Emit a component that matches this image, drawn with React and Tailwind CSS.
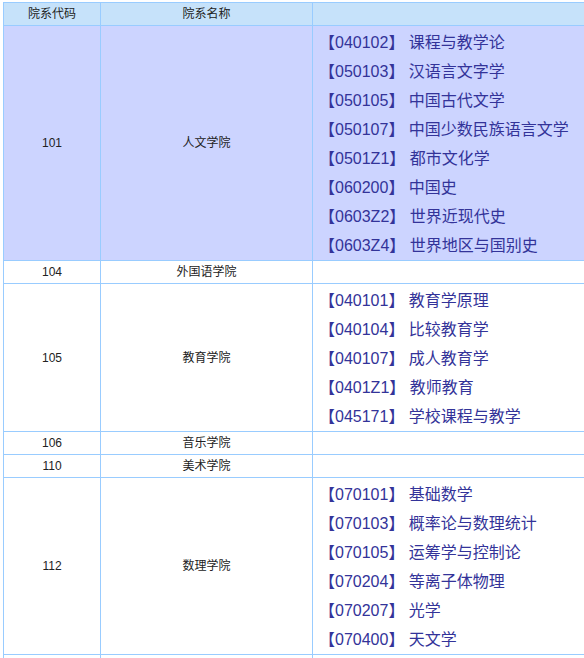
import React from 'react';

const rows = [
  {
    code: '101',
    name: '人文学院',
    hl: true,
    majors: [
      ['040102', '课程与教学论'],
      ['050103', '汉语言文字学'],
      ['050105', '中国古代文学'],
      ['050107', '中国少数民族语言文学'],
      ['0501Z1', '都市文化学'],
      ['060200', '中国史'],
      ['0603Z2', '世界近现代史'],
      ['0603Z4', '世界地区与国别史'],
    ],
  },
  { code: '104', name: '外国语学院', majors: [] },
  {
    code: '105',
    name: '教育学院',
    majors: [
      ['040101', '教育学原理'],
      ['040104', '比较教育学'],
      ['040107', '成人教育学'],
      ['0401Z1', '教师教育'],
      ['045171', '学校课程与教学'],
    ],
  },
  { code: '106', name: '音乐学院', majors: [] },
  { code: '110', name: '美术学院', majors: [] },
  {
    code: '112',
    name: '数理学院',
    majors: [
      ['070101', '基础数学'],
      ['070103', '概率论与数理统计'],
      ['070105', '运筹学与控制论'],
      ['070204', '等离子体物理'],
      ['070207', '光学'],
      ['070400', '天文学'],
    ],
  },
  { code: '', name: '', majors: [] },
];

const font = { fontFamily: '"Liberation Sans", "Noto Sans CJK SC", sans-serif' };

export default function App() {
  return (
    <div className="h-screen overflow-hidden bg-white pl-[3px] pt-[2px]" style={font}>
      <table className="w-[640px] table-fixed border-collapse border border-[#99ccff] text-[12px] text-[#222]">
        <colgroup>
          <col className="w-[97px]" />
          <col className="w-[212px]" />
          <col />
        </colgroup>
        <thead>
          <tr className="h-[23px] bg-[#c6e2fa]">
            <th className="border border-[#99ccff] p-0 text-center font-normal">院系代码</th>
            <th className="border border-[#99ccff] p-0 text-center font-normal">院系名称</th>
            <th className="border border-[#99ccff] p-0"></th>
          </tr>
        </thead>
        <tbody>
          {rows.map((r, i) => (
            <tr key={i} className={`h-[23px] ${r.hl ? 'bg-[#ccd4ff]' : 'bg-white'}`}>
              <td className="border border-[#99ccff] p-0 text-center">{r.code}</td>
              <td className="border border-[#99ccff] p-0 text-center">{r.name}</td>
              <td className="border border-[#99ccff] px-[6px] pt-[2px] pb-0 align-top">
                {r.majors.map(([c, n]) => (
                  <div key={c} className="whitespace-nowrap text-[16px] leading-[29px] text-[#333399]">
                    【{c}】 {n}
                  </div>
                ))}
              </td>
            </tr>
          ))}
        </tbody>
      </table>
    </div>
  );
}
